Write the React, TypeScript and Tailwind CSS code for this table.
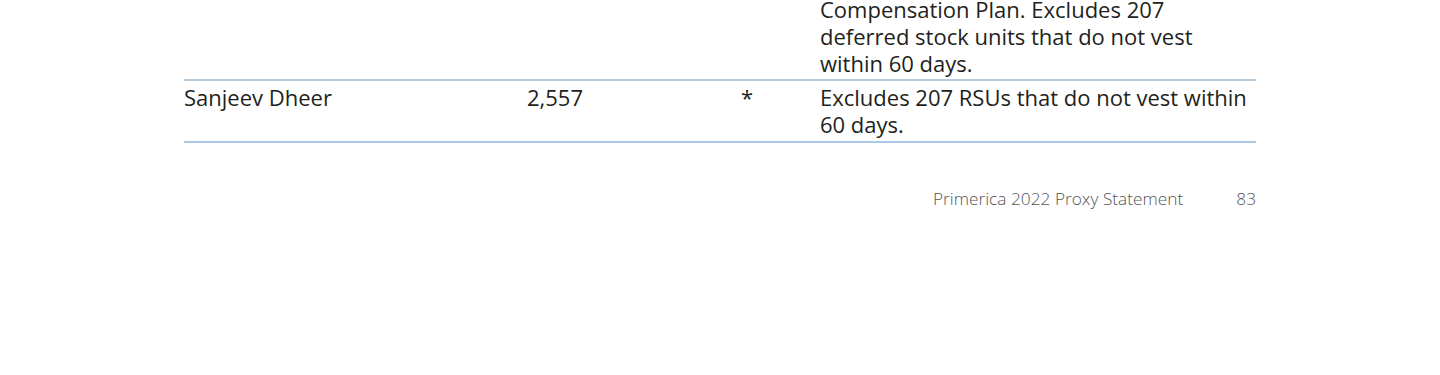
const rows = [
  {
    name: "",
    shares: "",
    percent: "",
    note: ["Compensation Plan. Excludes 207", "deferred stock units that do not vest", "within 60 days."],
  },
  {
    name: "Sanjeev Dheer",
    shares: "2,557",
    percent: "*",
    note: ["Excludes 207 RSUs that do not vest within", "60 days."],
  },
];

export default function App() {
  return (
    <div className="w-[1440px] h-[375px] overflow-hidden bg-white font-['Open_Sans',sans-serif] text-[#231f20]">
      <div className="w-[1072px] ml-[184px] -mt-[4px]">
        {rows.map((row, i) => (
          <div
            key={i}
            className={`grid grid-cols-[343px_214px_79px_1fr] text-[22px] leading-[27px] border-b-2 ${
              i === 0 ? "border-[#b7cbe0] pb-[2px]" : "border-[#acc8ea] pt-[3px] pb-[3px]"
            }`}
          >
            <div>{row.name}</div>
            <div>{row.shares}</div>
            <div>{row.percent}</div>
            <div className="whitespace-nowrap">
              {row.note.map((line) => (
                <div key={line}>{line}</div>
              ))}
            </div>
          </div>
        ))}
        <div className="flex justify-end items-center gap-[53px] mt-[44px] text-[17.3px] leading-[24px] text-[#555555] font-light">
          <span>Primerica 2022 Proxy Statement</span>
          <span>83</span>
        </div>
      </div>
    </div>
  );
}
